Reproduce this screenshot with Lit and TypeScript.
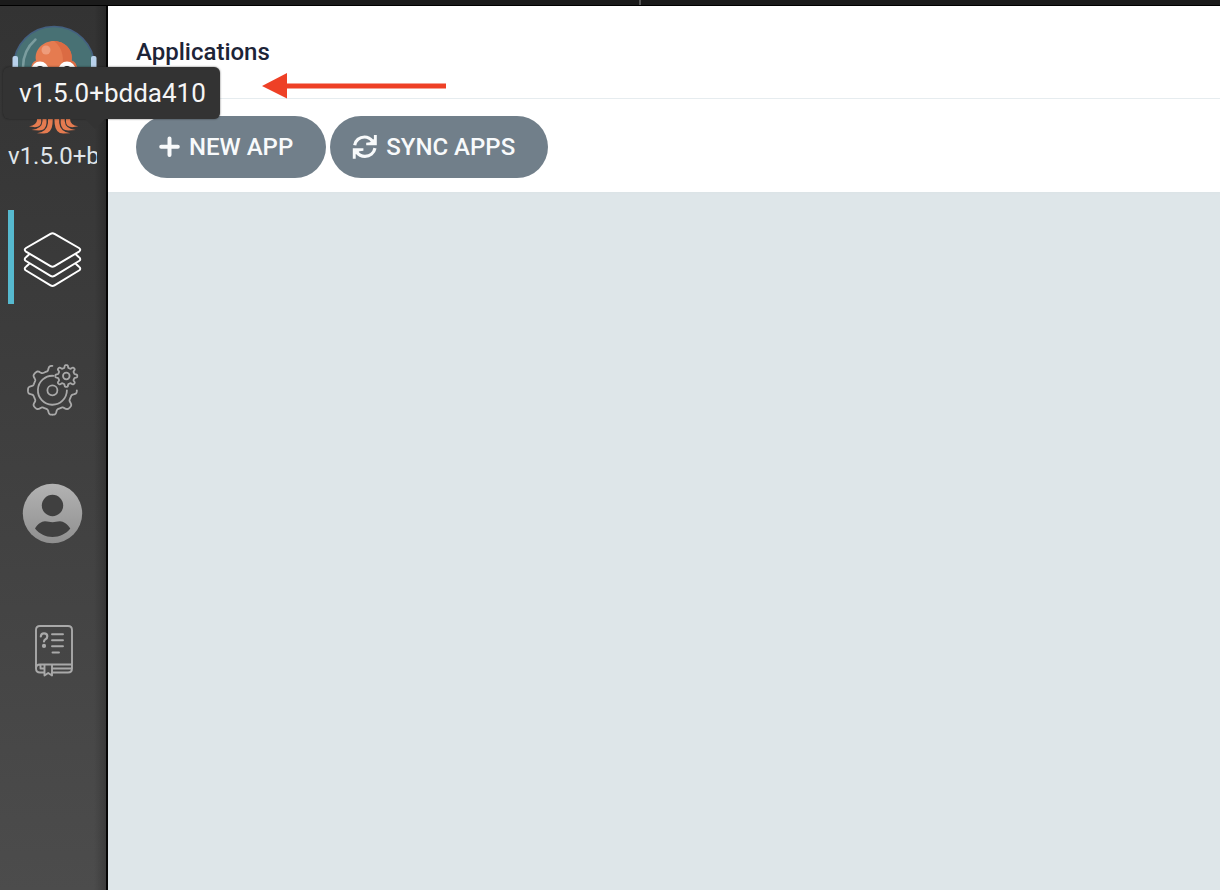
import { LitElement, html, css, svg } from "lit";
import { customElement, property } from "lit/decorators.js";

/** Outline of a gear as a polyline path; angles in degrees, clockwise from the right. */
function gearPath(cx: number, cy: number, inner: number, outer: number, from: number, to: number): string {
  const mid = (inner + outer) / 2;
  const amp = (outer - inner) / 2;
  const points: string[] = [];
  for (let a = from; a <= to; a += 2) {
    const t = (a * Math.PI) / 180;
    const r = mid + amp * Math.tanh(2.4 * Math.cos(8 * t) - 0.3);
    points.push(`${(cx + r * Math.cos(t)).toFixed(2)} ${(cy + r * Math.sin(t)).toFixed(2)}`);
  }
  return "M" + points.join("L");
}

/** The three tentacles left of the body's centre line; the right side mirrors them. */
const tentacles = svg`
  <path d="M37 108H41.200V122Q41 127 35 127.200L29 126.300Q37 125 37 120Z"/>
  <path d="M42.500 108H46.500V123Q46 130.500 39 130.600L31.500 130Q42 129 42.500 121Z"/>
  <path d="M48 108H53.400L52.500 124Q51.500 133.500 44 133.600L37 133.200Q47 132 48 123Z"/>
`;

const icons = {
  layers: svg`<g fill="none" stroke="#fff" stroke-width="2" stroke-linejoin="round" stroke-linecap="round">
    <path d="M30.5 8.8Q32.5 7.6 34.5 8.8L59 23Q61.500 24.800 59 26.600L34.500 41.200Q32.500 42.400 30.500 41.200L6 26.600Q3.500 24.800 6 23Z"/>
    <path d="M9 29.500L6 32.300Q3.500 34.200 6 36L30.500 50.800Q32.500 52 34.500 50.800L59 36Q61.500 34.200 59 32.300L56 29.500"/>
    <path d="M9 39L6 41.800Q3.500 43.700 6 45.500L30.500 60.300Q32.500 61.500 34.500 60.300L59 45.500Q61.500 43.700 59 41.800L56 39"/>
  </g>`,
  gears: svg`<g fill="none" stroke="#a9a9a9" stroke-width="1.8" stroke-linejoin="round" stroke-linecap="round">
    <path d="${gearPath(32.4, 36.3, 19.5, 24.5, 0, 270)}"/>
    <path d="M33.500 21.800A14.500 14.500 0 1 0 46.900 36.300"/>
    <circle cx="32.400" cy="36.300" r="5"/>
    <path d="${gearPath(46.3, 22, 8.2, 11, 0, 360)}Z"/>
    <circle cx="46.300" cy="22" r="3.300"/>
  </g>`,
  user: svg`<defs><linearGradient id="disc" x2="0" y2="1"><stop stop-color="#b3b3b3"/><stop offset="1" stop-color="#8f8f8f"/></linearGradient></defs>
    <circle cx="32.500" cy="30.500" r="29.700" fill="url(#disc)"/>
    <circle cx="32.500" cy="22.500" r="10.700" fill="#404040"/>
    <path fill="#404040" d="M15 45.500C17.500 41 21.500 38.300 25 38.200C28 38.200 30 39.200 32.500 39.200C35 39.200 37 38.200 40 38.200C43.500 38.300 47.500 41 50.300 45.500C46 51 39.500 54 32.500 54C25.500 54 19.500 51 15 45.500Z"/>`,
  docs: svg`<g fill="none" stroke="#a9a9a9" stroke-width="1.900" stroke-linejoin="round" stroke-linecap="round">
    <path d="M24 60.500H20Q16 60.500 16 56.500V18Q16 14 20 14H48Q52 14 52 18V56.500Q52 60.500 48 60.500H32.500M16 56.500Q16 52.500 20 52.500H52M24 56.500H20.500V53M32.500 56.500H51"/>
    <path d="M24.500 53V63.500L28.200 61L32 63.500V53"/>
    <path d="M20.800 24.500Q21 21.300 24 21.300Q27.300 21.300 27.300 24.300Q27.300 26.300 25.500 27.200Q24 28 24 29.500" stroke-width="2.200"/>
    <path d="M32 22.300H43M32 28.300H43M32 34.300H43M32.500 40.500H39"/>
  </g><circle cx="24" cy="33.900" r="2.100" fill="#a9a9a9"/>`,
};

@customElement("side-nav")
class SideNav extends LitElement {
  @property() version = "";

  static styles = css`
    :host {
      position: relative;
      display: flex;
      flex-direction: column;
      width: 108px;
      flex: none;
      box-sizing: border-box;
      border-right: 2px solid #050505;
      background: linear-gradient(to right, transparent 94px, rgba(0, 0, 0, 0.2)),
        linear-gradient(#333 0, #363636 110px, #4c4c4c);
    }
    .brand {
      display: flex;
      flex-direction: column;
      padding: 16px 9px 0 8px;
      height: 204px;
      box-sizing: border-box;
    }
    .logo {
      width: 92px;
      height: 114px;
      flex: none;
    }
    .version {
      overflow: hidden;
      white-space: nowrap;
      font-size: 24px;
      line-height: 40px;
      color: #dfe5ea;
    }
    .tooltip {
      position: absolute;
      z-index: 2;
      left: 3px;
      top: 61px;
      padding: 0 14px 0 16px;
      border-radius: 6px;
      background: #333;
      box-shadow: 0 0 2px rgba(20, 20, 20, 0.7);
      font-size: 26px;
      line-height: 52px;
      color: #f5f5f5;
      white-space: nowrap;
    }
    .tooltip::after {
      content: "";
      position: absolute;
      left: 82px;
      top: 52px;
      border: 10px solid transparent;
      border-top-color: #333;
    }
    .links {
      display: flex;
      flex-direction: column;
      gap: 35px;
    }
    .link {
      display: flex;
      align-items: center;
      height: 94px;
      margin-left: 8px;
      padding-left: 6px;
      border-left: 6px solid transparent;
    }
    .active {
      border-left-color: #56b9cf;
    }
    .icon {
      width: 64px;
      height: 64px;
      overflow: visible;
    }
  `;

  private link(name: string, icon: unknown, active = false) {
    return html`<a class="link ${active ? "active" : ""}" href="#" aria-label=${name}>
      <svg class="icon" viewBox="0 0 64 64" aria-hidden="true">${icon}</svg>
    </a>`;
  }

  render() {
    return html`
      <div class="brand">
        <svg class="logo" viewBox="8 22 92 114" aria-hidden="true">
          <circle cx="54" cy="67" r="40.500" fill="#487174" stroke="#446080" stroke-width="1.500"/>
          <path d="M23 67C23 55 27 47 35.500 39.500" fill="none" stroke="#7b9d9f" stroke-width="2.500" stroke-linecap="round"/>
          <rect x="12.500" y="56" width="5.500" height="26" rx="2" fill="#b9d2ec"/>
          <rect x="91" y="56" width="5.500" height="26" rx="2" fill="#b9d2ec"/>
          <path d="M31 70Q31 62 36 60.500C34 50 43 41 53.700 41S73.500 50 71.500 60.500Q77 62 77 70V108H31Z" fill="#e57b50"/>
          <path d="M54 41C65 41 73.500 50 71.500 60.500Q77 62 77 70H61C65 60 63 48 54 41Z" fill="#db6b43"/>
          <circle cx="46" cy="50" r="4.500" fill="#ee9c7b"/>
          <circle cx="40" cy="70" r="8.500" fill="#fff"/>
          <circle cx="67" cy="70" r="8.500" fill="#fff"/>
          <circle cx="40" cy="70" r="4" fill="#222"/>
          <circle cx="67" cy="70" r="4" fill="#222"/>
          <g fill="#e57b50">${tentacles}</g>
          <g fill="#e57b50" transform="translate(107.200 0) scale(-1 1)">${tentacles}</g>
        </svg>
        <div class="version">${this.version}</div>
      </div>
      <div class="tooltip" role="tooltip">${this.version}</div>
      <nav class="links">
        ${this.link("Applications", icons.layers, true)}
        ${this.link("Settings", icons.gears)}
        ${this.link("User info", icons.user)}
        ${this.link("Documentation", icons.docs)}
      </nav>
    `;
  }
}

@customElement("app-root")
class AppRoot extends LitElement {
  static styles = css`
    :host {
      display: flex;
      flex-direction: column;
      min-height: 100vh;
      font-family: Roboto, sans-serif;
      background: #dee6e9;
    }
    .strip {
      display: flex;
      justify-content: center;
      height: 6px;
      box-sizing: border-box;
      border-bottom: 1px solid #000;
      background: #1b1b1b;
    }
    .divider {
      width: 2px;
      margin-left: 60px;
      background: #555;
    }
    .body {
      display: flex;
      flex: 1;
    }
    .main {
      flex: 1;
      min-width: 0;
    }
    .header {
      position: relative;
      height: 93px;
      box-sizing: border-box;
      padding: 26px 28px 0;
      border-bottom: 1px solid #e6ecef;
      background: #fff;
    }
    .title {
      margin: 0;
      font-size: 24px;
      line-height: 40px;
      font-weight: 500;
      color: #1d2437;
    }
    .pointer {
      position: absolute;
      left: 154px;
      top: 66px;
      width: 186px;
      height: 28px;
      z-index: 1;
    }
    .toolbar {
      display: flex;
      gap: 4px;
      padding: 17px 28px 14px;
      background: #fff;
      box-shadow: 0 1px 2px #dbe3e6;
    }
    .button {
      display: flex;
      align-items: center;
      gap: 8px;
      height: 62px;
      padding: 0 33px 0 22px;
      border: 0;
      border-radius: 31px;
      background: #717f8a;
      color: #f8fafb;
      font: 500 24px/28px Roboto, sans-serif;
      white-space: nowrap;
    }
    .glyph {
      height: 24px;
    }
    .plus {
      width: 23px;
    }
    .sync {
      width: 26px;
    }
  `;

  render() {
    return html`
      <div class="strip"><div class="divider"></div></div>
      <div class="body">
        <side-nav version="v1.5.0+bdda410"></side-nav>
        <main class="main">
          <header class="header">
            <h1 class="title">Applications</h1>
            <svg class="pointer" viewBox="0 0 186 28" aria-hidden="true">
              <path d="M0 14L25 1V11.500H184V16.500H25V26.500Z" fill="#ee4026"/>
            </svg>
          </header>
          <div class="toolbar">
            <button class="button" type="button">
              <svg class="glyph plus" viewBox="0 0 23 24" aria-hidden="true">
                <path d="M11.500 3.500V20M3.200 11.800H19.800" stroke="currentColor" stroke-width="4" stroke-linecap="round"/>
              </svg>
              NEW APP
            </button>
            <button class="button" type="button">
              <svg class="glyph sync" viewBox="0 0 26 24" aria-hidden="true" fill="none" stroke="currentColor" stroke-width="3.200">
                <path d="M2.700 10.200C3.500 5.500 7.500 2 12.500 2C16 2 18.500 3.500 20.500 6.200"/>
                <path d="M23 13.200C22 18 18 21.300 13 21.300C9.500 21.300 6.500 19.800 4.500 17"/>
                <path d="M24.800 -.2V10.200H14.200V7.700L18 7.200L21.900 4V-.2Z" fill="currentColor" stroke="none"/>
                <path d="M.8 23.800V13.200H11.400V15.700L7.500 16.200L3.700 19.300V23.800Z" fill="currentColor" stroke="none"/>
              </svg>
              SYNC APPS
            </button>
          </div>
        </main>
      </div>
    `;
  }
}
